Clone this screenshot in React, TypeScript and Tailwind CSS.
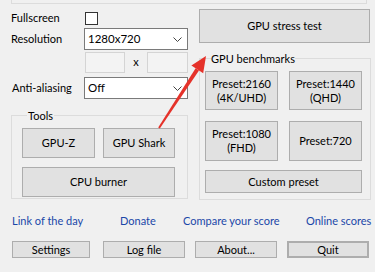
import type { ReactNode } from "react";

// classic win32 benchmark launcher window, bottom part of the main dialog
const font = { fontFamily: 'Lato, "Noto Sans", "Liberation Sans", sans-serif' };

function Btn({ children, className = "" }: { children: ReactNode; className?: string }) {
  return (
    <button
      className={
        "flex items-center justify-center border border-[#adadad] bg-[#e1e1e1] text-center leading-[14px] text-black " +
        className
      }
    >
      {children}
    </button>
  );
}

function Combo({ value }: { value: string }) {
  return (
    <div className="flex h-[22px] w-[104px] items-center justify-between border border-[#7a7a7a] bg-white pl-[3px] pr-[5px] text-[11.5px]">
      <span>{value}</span>
      <svg width="9" height="5" viewBox="0 0 9 5" className="text-[#444]">
        <polyline points="0.5,0.5 4.5,4.5 8.5,0.5" fill="none" stroke="currentColor" strokeWidth="1" />
      </svg>
    </div>
  );
}

const LINKS = [
  { label: "Link of the day", w: "w-[108px]" },
  { label: "Donate", w: "w-[63px]" },
  { label: "Compare your score", w: "w-[123px]" },
  { label: "Online scores", w: "" },
];

export default function App() {
  return (
    <div className="relative h-[272px] w-[375px] overflow-hidden bg-[#f0f0f0] text-[11px] text-black" style={font}>
      {/* tail end of the group box above */}
      <div className="ml-[11px] mr-[8px] h-[4px] border-x border-b border-[#dcdcdc]" />

      <div className="mt-[5px] flex pl-[11px]">
        {/* left column */}
        <div className="flex w-[177px] flex-col">
          <div className="flex h-[18px] items-center">
            <span className="w-[74px]">Fullscreen</span>
            <span className="h-[13px] w-[13px] border border-[#333] bg-white" />
          </div>
          <div className="mt-[1px] flex items-center">
            <span className="w-[73px]">Resolution</span>
            <Combo value="1280x720" />
          </div>
          <div className="mt-[2px] flex h-[21px] items-center pl-[74px]">
            <span className="h-[21px] w-[40px] border border-[#d4d4d4] bg-[#f3f3f3]" />
            <span className="w-[22px] text-center">x</span>
            <span className="h-[21px] w-[41px] border border-[#d4d4d4] bg-[#f3f3f3]" />
          </div>
          <div className="mt-[4px] flex items-center">
            <span className="ml-[1px] w-[72px]">Anti-aliasing</span>
            <Combo value="Off" />
          </div>

          <fieldset className="mt-[9px] border border-[#dcdcdc] pb-[1px] pl-[10px] pr-[12px]">
            <legend className="ml-[5px] px-[1px] leading-[15px]">Tools</legend>
            <div className="mt-[5px] flex gap-[8px]">
              <Btn className="h-[30px] w-[73px]">GPU-Z</Btn>
              <Btn className="h-[30px] w-[72px]">GPU Shark</Btn>
            </div>
            <Btn className="mt-[9px] h-[30px] w-[153px]">CPU burner</Btn>
          </fieldset>
        </div>

        {/* right column */}
        <div className="ml-[11px] flex w-[172px] flex-col">
          <Btn className="h-[34px] w-[171px]">GPU stress test</Btn>
          <fieldset className="mt-[8px] border border-[#dcdcdc] pb-[6px] pl-[5px]">
            <legend className="ml-[6px] leading-[15px]">GPU benchmarks</legend>
            <div className="mt-[5px] flex gap-[11px]">
              <Btn className="h-[39px] w-[73px] flex-col">
                <span>Preset:2160</span>
                <span>(4K/UHD)</span>
              </Btn>
              <Btn className="h-[39px] w-[73px] flex-col">
                <span>Preset:1440</span>
                <span>(QHD)</span>
              </Btn>
            </div>
            <div className="mt-[11px] flex gap-[11px]">
              <Btn className="h-[40px] w-[73px] flex-col">
                <span>Preset:1080</span>
                <span>(FHD)</span>
              </Btn>
              <Btn className="h-[40px] w-[73px]">Preset:720</Btn>
            </div>
            <Btn className="mt-[9px] h-[23px] w-[157px]">Custom preset</Btn>
          </fieldset>
        </div>
      </div>

      <div className="mt-[13px] flex whitespace-nowrap pl-[12px] leading-[15px] text-[#1a47a8]">
        {LINKS.map((l) => (
          <span key={l.label} className={l.w}>
            {l.label}
          </span>
        ))}
      </div>

      <div className="mt-[13px] flex pl-[12px]">
        <Btn className="h-[17px] w-[78px]">Settings</Btn>
        <Btn className="ml-[13px] h-[17px] w-[82px]">Log file</Btn>
        <Btn className="ml-[10px] h-[17px] w-[82px]">About...</Btn>
        <Btn className="ml-[10px] h-[17px] w-[82px] border-2 border-[#1c6fbf]">Quit</Btn>
      </div>

      {/* red annotation arrow drawn over the dialog */}
      <svg className="pointer-events-none absolute left-0 top-0" width="375" height="272" viewBox="0 0 375 272">
        <polygon points="159.8,128.5 158.2,127.5 195.6,68.3 199,70.5" fill="#e5322a" />
        <polygon points="206,56 191.4,65.6 203.2,73.2" fill="#e5322a" />
      </svg>
    </div>
  );
}
